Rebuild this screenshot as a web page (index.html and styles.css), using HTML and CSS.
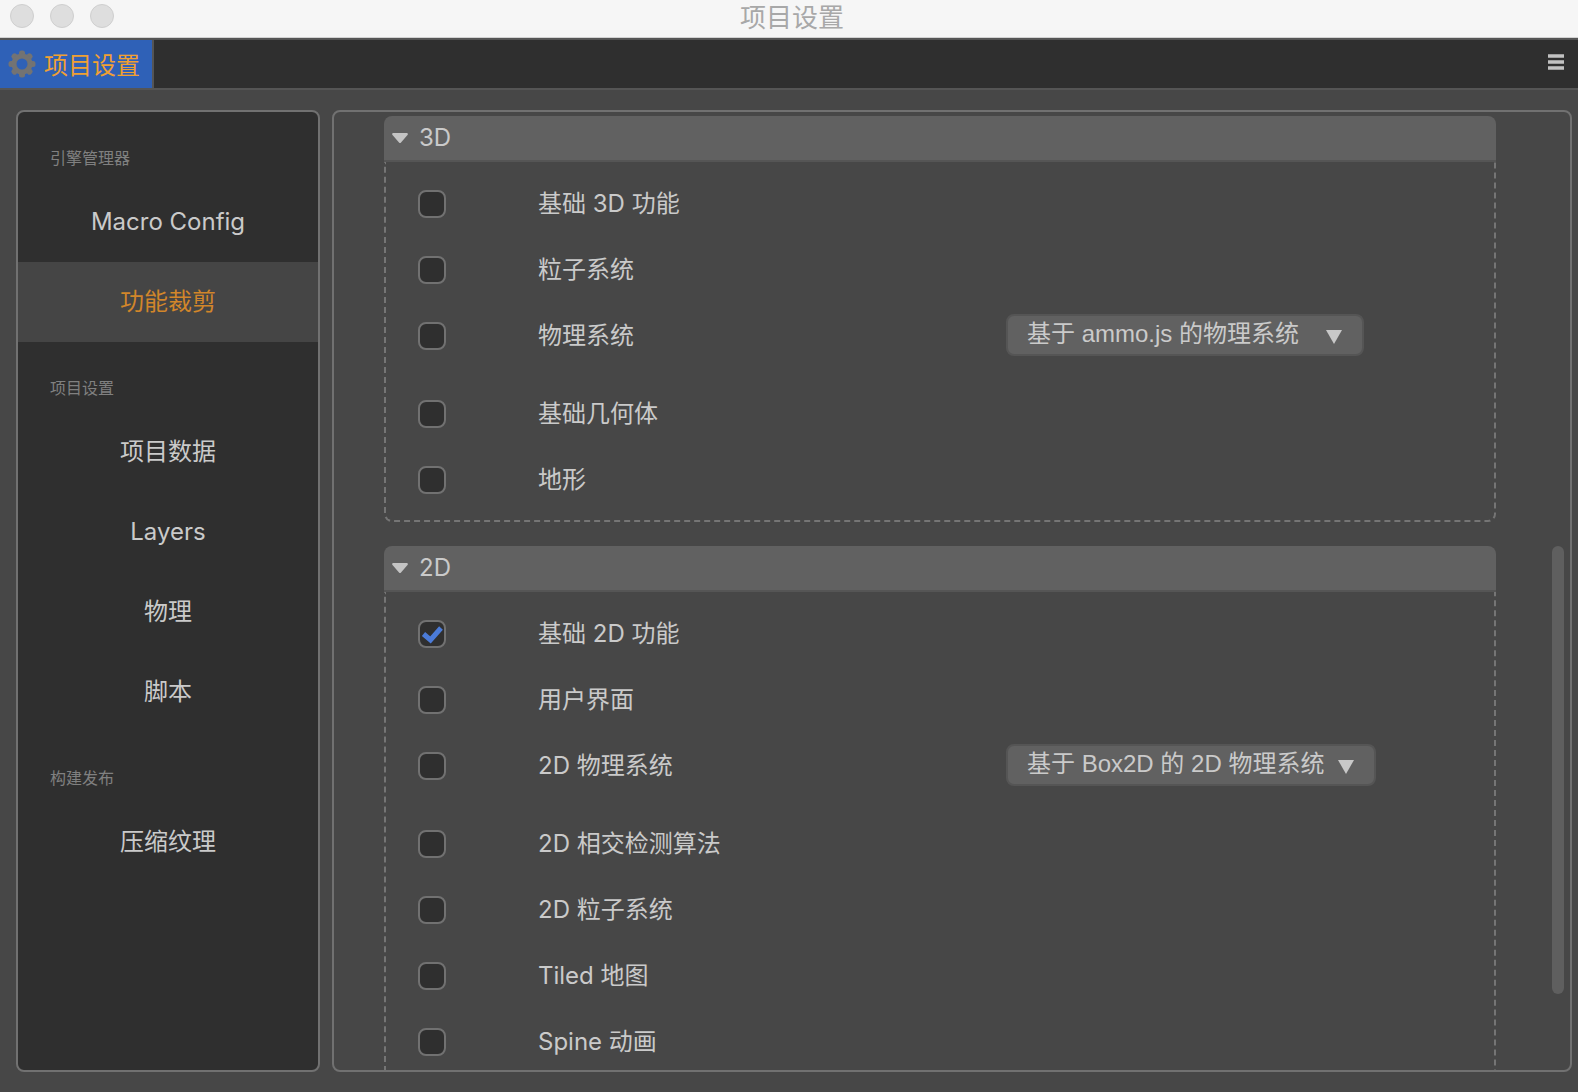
FILE: index.html
```html
<!DOCTYPE html>
<html lang="zh-CN">
<head>
<meta charset="utf-8">
<title>项目设置</title>
<link rel="stylesheet" href="styles.css">
</head>
<body class="window">
<header class="titlebar">
  <div class="lights"><span class="light"></span><span class="light"></span><span class="light"></span></div>
  <h1 class="titlebar-text">项目设置</h1>
</header>
<div class="tabs">
  <button class="tab" type="button">
    <svg class="gear" viewBox="0 0 28 28" aria-hidden="true">
      <g fill="#737373">
        <g id="teeth"><rect x="11" y="0.500" width="6" height="27" rx="2.500"/><rect x="0.500" y="11" width="27" height="6" rx="2.500"/></g>
        <use href="#teeth" transform="rotate(45 14 14)"/>
      </g>
      <circle cx="14" cy="14" r="8" fill="none" stroke="#737373" stroke-width="5"/>
      <circle cx="14" cy="14" r="5.500" fill="#2f61b7"/>
    </svg>
    <span class="tab-text">项目设置</span>
  </button>
  <button class="menu" type="button" aria-label="菜单">
    <svg width="16" height="16" viewBox="0 0 16 16" aria-hidden="true"><path d="M0 2h16M0 8h16M0 14h16" stroke="#c2c2c2" stroke-width="3.400"/></svg>
  </button>
</div>
<div class="content">
  <nav class="sidebar">
    <h2 class="group">引擎管理器</h2>
    <a class="item" href="#macro">Macro Config</a>
    <a class="item item-active" href="#feature">功能裁剪</a>
    <h2 class="group">项目设置</h2>
    <a class="item" href="#data">项目数据</a>
    <a class="item" href="#layers">Layers</a>
    <a class="item" href="#physics">物理</a>
    <a class="item" href="#script">脚本</a>
    <h2 class="group">构建发布</h2>
    <a class="item" href="#texture">压缩纹理</a>
  </nav>
  <main class="panel">
    <div class="sections">
      <section class="section">
        <button class="section-head" type="button"><svg class="caret" viewBox="0 0 16 10" aria-hidden="true"><path d="M1 0h14q1.500 .5.500 2L9 9.500q-1 1-2 0L.5 2Q-.5.500 1 0z" fill="#c4c4c4"/></svg>3D</button>
        <div class="section-body">
          <div class="row"><input class="check" type="checkbox" id="f1"><label for="f1">基础 3D 功能</label></div>
          <div class="row"><input class="check" type="checkbox" id="f2"><label for="f2">粒子系统</label></div>
          <div class="row row-choice"><input class="check" type="checkbox" id="f3"><label for="f3">物理系统</label><select class="select select-3d" aria-label="物理系统"><option>基于 ammo.js 的物理系统</option></select></div>
          <div class="row"><input class="check" type="checkbox" id="f4"><label for="f4">基础几何体</label></div>
          <div class="row"><input class="check" type="checkbox" id="f5"><label for="f5">地形</label></div>
        </div>
      </section>
      <section class="section">
        <button class="section-head" type="button"><svg class="caret" viewBox="0 0 16 10" aria-hidden="true"><path d="M1 0h14q1.500 .5.500 2L9 9.500q-1 1-2 0L.5 2Q-.5.500 1 0z" fill="#c4c4c4"/></svg>2D</button>
        <div class="section-body">
          <div class="row"><input class="check" type="checkbox" id="g1" checked><label for="g1">基础 2D 功能</label></div>
          <div class="row"><input class="check" type="checkbox" id="g2"><label for="g2">用户界面</label></div>
          <div class="row row-choice"><input class="check" type="checkbox" id="g3"><label for="g3">2D 物理系统</label><select class="select select-2d" aria-label="2D 物理系统"><option>基于 Box2D 的 2D 物理系统</option></select></div>
          <div class="row"><input class="check" type="checkbox" id="g4"><label for="g4">2D 相交检测算法</label></div>
          <div class="row"><input class="check" type="checkbox" id="g5"><label for="g5">2D 粒子系统</label></div>
          <div class="row"><input class="check" type="checkbox" id="g6"><label for="g6">Tiled 地图</label></div>
          <div class="row"><input class="check" type="checkbox" id="g7"><label for="g7">Spine 动画</label></div>
        </div>
      </section>
    </div>
    <div class="track"><div class="thumb"></div></div>
  </main>
</div>
</body>
</html>
```
FILE: styles.css
```css
* { box-sizing: border-box; }

.window {
  margin: 0;
  height: 100vh;
  display: flex;
  flex-direction: column;
  overflow: hidden;
  background: #474747;
  color: #cacaca;
  font: 24px/32px Inter, "Noto Sans CJK SC", sans-serif;
}

button, select { font: inherit; color: inherit; border: 0; padding: 0; margin: 0; }

.titlebar {
  flex: none;
  height: 38px;
  display: grid;
  grid-template-columns: 1fr auto 1fr;
  align-items: center;
  padding: 0 8px 0 10px;
  background: #f6f6f6;
  border-bottom: 1px solid #d2d2d2;
}
.lights { display: flex; gap: 16px; padding-bottom: 5px; }
.light { width: 24px; height: 24px; border-radius: 50%; background: #dedede; border: 1px solid #cfcfcf; }
.titlebar-text { margin: 0; padding: 0 0 2px 4px; font-size: 26px; line-height: 32px; font-weight: 400; color: #a8a8a8; }

.tabs {
  flex: none;
  height: 52px;
  display: flex;
  justify-content: space-between;
  background: #2f2f2f;
  border-top: 2px solid #555;
  border-bottom: 2px solid #555;
}
.tab {
  display: flex;
  align-items: center;
  gap: 8px;
  padding: 0 12px 0 8px;
  background: #2f61b7;
  color: #f0a033;
  border-right: 2px solid #555;
}
.tab-text { padding-top: 4px; }
.gear { width: 28px; height: 28px; }
.menu { width: 44px; display: grid; place-items: center; padding-bottom: 4px; background: none; }

.content {
  flex: 1;
  min-height: 0;
  display: grid;
  grid-template-columns: 304px 1fr;
  gap: 12px;
  padding: 20px 6px 20px 16px;
}

.sidebar { background: #2f2f2f; border: 2px solid #717171; border-radius: 8px; overflow: hidden; }
.group { margin: 0; padding: 34px 32px 12px; font-size: 16px; line-height: 24px; font-weight: 400; color: #808080; }
.item { display: block; padding: 24px 0; text-align: center; color: inherit; text-decoration: none; }
.item-active { background: #454545; color: #d2862a; }

.panel {
  min-height: 0;
  display: grid;
  grid-template-columns: 1fr 12px;
  grid-template-rows: minmax(0, 1fr);
  column-gap: 56px;
  padding: 0 6px 0 50px;
  border: 2px solid #717171;
  border-radius: 8px;
  overflow: hidden;
}
.sections { display: flex; flex-direction: column; gap: 24px; padding-top: 4px; }
.section { flex: none; }
.section-head {
  display: flex;
  align-items: center;
  gap: 11px;
  width: 100%;
  height: 46px;
  padding: 0 8px;
  background: #616161;
  border-bottom: 2px solid #555;
  border-radius: 8px 8px 0 0;
}
.caret { width: 16px; height: 10px; }
.section-body {
  padding: 9px 20px 7px 32px;
  border: 2px dashed #757575;
  border-top: 0;
  border-radius: 0 0 8px 8px;
}
.row { display: grid; grid-template-columns: 120px 1fr 1fr; align-items: center; height: 66px; }
.row-choice { margin-bottom: 12px; }

.check {
  appearance: none;
  width: 28px;
  height: 28px;
  margin: 0;
  background: #2f2f2f center / 24px 24px no-repeat;
  border: 2px solid #717171;
  border-radius: 8px;
}
.check:checked {
  background-image: url("data:image/svg+xml,%3Csvg xmlns='http://www.w3.org/2000/svg' viewBox='0 0 24 24'%3E%3Cpath d='M3.500 12l7 6L21 6' fill='none' stroke='%234b7bd8' stroke-width='5'/%3E%3C/svg%3E");
}

.select {
  appearance: none;
  height: 42px;
  margin-bottom: 2px;
  padding: 0 19px 2px;
  background: #616161 url("data:image/svg+xml,%3Csvg xmlns='http://www.w3.org/2000/svg' viewBox='0 0 16 14'%3E%3Cpath d='M0 0h16L8 14z' fill='%23c8c8c8'/%3E%3C/svg%3E") right 20px top 14px / 16px 14px no-repeat;
  border: 2px solid #555;
  border-radius: 8px;
  font-family: "Liberation Sans", "Noto Sans CJK SC", sans-serif;
}
.select-3d { width: 358px; }
.select-2d { width: 370px; }

.track { display: grid; grid-template-rows: 434fr 448fr 76fr; }
.thumb { grid-row: 2; background: #5f5f5f; border-radius: 6px; }
```
